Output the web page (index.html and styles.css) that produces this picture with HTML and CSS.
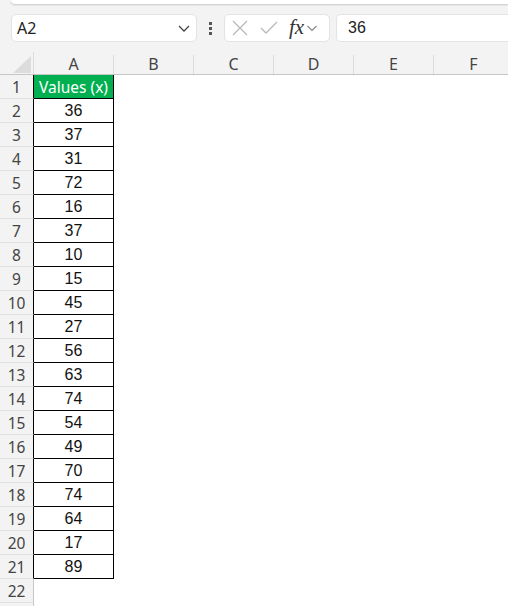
FILE: index.html
```html
<!DOCTYPE html>
<html>
<head>
<meta charset="utf-8">
<link rel="stylesheet" href="styles.css">
</head>
<body>
<div class="topbar"></div>
<div class="fbar">
  <div class="namebox">
    <span class="nb-text">A2</span>
    <svg class="chev" width="14" height="10" viewBox="0 0 14 10"><path d="M2 3 L7 8 L12 3" fill="none" stroke="#444" stroke-width="1.3"/></svg>
  </div>
  <div class="dots"><span></span><span></span><span></span></div>
  <div class="fbtns">
    <svg class="ic" width="20" height="20" viewBox="0 0 20 20"><path d="M3 3 L17 17 M17 3 L3 17" stroke="#b8b8b8" stroke-width="1.3" fill="none"/></svg>
    <svg class="ic" width="20" height="20" viewBox="0 0 20 20"><path d="M2 10 L7 15 L18 4" stroke="#b8b8b8" stroke-width="1.3" fill="none"/></svg>
    <span class="fx">fx</span>
    <svg class="chev2" width="12" height="8" viewBox="0 0 12 8"><path d="M1.5 2 L6 6.5 L10.5 2" fill="none" stroke="#888" stroke-width="1.2"/></svg>
  </div>
  <div class="finput">36</div>
</div>
<div class="sheet">
  <div class="hrow">
    <div class="corner"><svg width="18" height="17" viewBox="0 0 18 17"><path d="M18 0 L18 17 L0 17 Z" fill="#dcdcdc"/></svg></div>
    <div class="ch">A</div><div class="ch">B</div><div class="ch">C</div><div class="ch">D</div><div class="ch">E</div><div class="ch">F</div>
  </div>
  <div class="row data"><div class="rh">1</div><div class="c a head">Values (x)</div></div>
  <div class="row data"><div class="rh">2</div><div class="c a">36</div></div>
  <div class="row data"><div class="rh">3</div><div class="c a">37</div></div>
  <div class="row data"><div class="rh">4</div><div class="c a">31</div></div>
  <div class="row data"><div class="rh">5</div><div class="c a">72</div></div>
  <div class="row data"><div class="rh">6</div><div class="c a">16</div></div>
  <div class="row data"><div class="rh">7</div><div class="c a">37</div></div>
  <div class="row data"><div class="rh">8</div><div class="c a">10</div></div>
  <div class="row data"><div class="rh">9</div><div class="c a">15</div></div>
  <div class="row data"><div class="rh">10</div><div class="c a">45</div></div>
  <div class="row data"><div class="rh">11</div><div class="c a">27</div></div>
  <div class="row data"><div class="rh">12</div><div class="c a">56</div></div>
  <div class="row data"><div class="rh">13</div><div class="c a">63</div></div>
  <div class="row data"><div class="rh">14</div><div class="c a">74</div></div>
  <div class="row data"><div class="rh">15</div><div class="c a">54</div></div>
  <div class="row data"><div class="rh">16</div><div class="c a">49</div></div>
  <div class="row data"><div class="rh">17</div><div class="c a">70</div></div>
  <div class="row data"><div class="rh">18</div><div class="c a">74</div></div>
  <div class="row data"><div class="rh">19</div><div class="c a">64</div></div>
  <div class="row data"><div class="rh">20</div><div class="c a">17</div></div>
  <div class="row data"><div class="rh">21</div><div class="c a">89</div></div>
  <div class="row"><div class="rh">22</div></div>
  <div class="row"><div class="rh"></div></div>
</div>
</body>
</html>
```

FILE: styles.css
```css
* { box-sizing: border-box; }
html, body { margin: 0; padding: 0; }
body {
  width: 508px;
  height: 606px;
  overflow: hidden;
  background: #f3f3f3;
  font-family: "Noto Sans", "Open Sans", sans-serif;
  color: #222;
}
.topbar {
  height: 4px;
  margin-left: 11px;
  background: #ffffff;
  border-bottom-left-radius: 6px;
  box-shadow: 0 1px 2px rgba(0,0,0,0.18);
}
.fbar {
  display: flex;
  align-items: center;
  height: 28px;
  margin-top: 10px;
  padding-left: 11px;
}
.namebox {
  width: 186px;
  flex: none;
  height: 28px;
  background: #fff;
  border: 1px solid #e3e3e3;
  border-radius: 5px;
  display: flex;
  align-items: center;
  justify-content: space-between;
  padding: 0 5px 0 5px;
}
.nb-text { font-size: 16px; color: #222; }
.dots {
  width: 27px;
  flex: none;
  display: flex;
  flex-direction: column;
  align-items: center;
  gap: 2px;
}
.dots span { width: 3px; height: 3px; background: #555; display: block; }
.fbtns {
  width: 106px;
  flex: none;
  height: 28px;
  background: #fff;
  border: 1px solid #e3e3e3;
  border-radius: 5px;
  display: flex;
  align-items: center;
  padding-left: 5px;
  gap: 9px;
}
.fbtns .ic { flex: none; }
.fx {
  font-family: "Liberation Serif", serif;
  font-style: italic;
  font-size: 21px;
  color: #333;
  margin-left: 1px;
  line-height: 1;
  margin-top: -2px;
}
.chev2 { margin-left: -7px; }
.finput {
  flex: 1;
  height: 28px;
  margin-left: 6px;
  background: #fff;
  border: 1px solid #e3e3e3;
  border-right: none;
  border-radius: 5px 0 0 5px;
  font-family: "Liberation Sans", Arial, sans-serif;
  font-size: 16px;
  display: flex;
  align-items: center;
  padding-left: 11px;
  color: #222;
}
.sheet {
  margin-top: 10px;
  background: #fff;
  overflow: hidden;
}
.hrow {
  display: flex;
  height: 23px;
  background: #f3f3f3;
  border-bottom: 1px solid #c6c6c6;
}
.corner {
  width: 34px;
  flex: none;
  display: flex;
  align-items: flex-end;
  justify-content: flex-end;
  padding: 0 2px 1px 0;
  border-right: 1px solid #dcdcdc;
}
.ch {
  width: 80px;
  flex: none;
  display: flex;
  align-items: flex-end;
  justify-content: center;
  font-size: 16px;
  color: #444;
  line-height: 20px;
  border-right: 1px solid #dcdcdc;
  margin-top: 3px;
}
.row {
  display: flex;
  height: 24px;
}
.rh {
  width: 34px;
  flex: none;
  background: #f3f3f3;
  border-right: 1px solid #c6c6c6;
  border-bottom: 1px solid #e1e1e1;
  display: flex;
  align-items: center;
  justify-content: center;
  font-size: 15.5px;
  color: #444;
  padding-top: 1px;
}
.row.data .rh { border-right-color: #000; }
.c {
  width: 80px;
  flex: none;
  display: flex;
  align-items: center;
  justify-content: center;
  font-family: "Liberation Sans", Arial, sans-serif;
  font-size: 16px;
  color: #111;
  padding-top: 1px;
}
.c.a {
  border-right: 1px solid #000;
  border-bottom: 1px solid #000;
}
.c.head {
  background: #00b050;
  color: #fff;
  font-family: "Noto Sans", "Open Sans", sans-serif;
  font-size: 15.5px;
}
```
